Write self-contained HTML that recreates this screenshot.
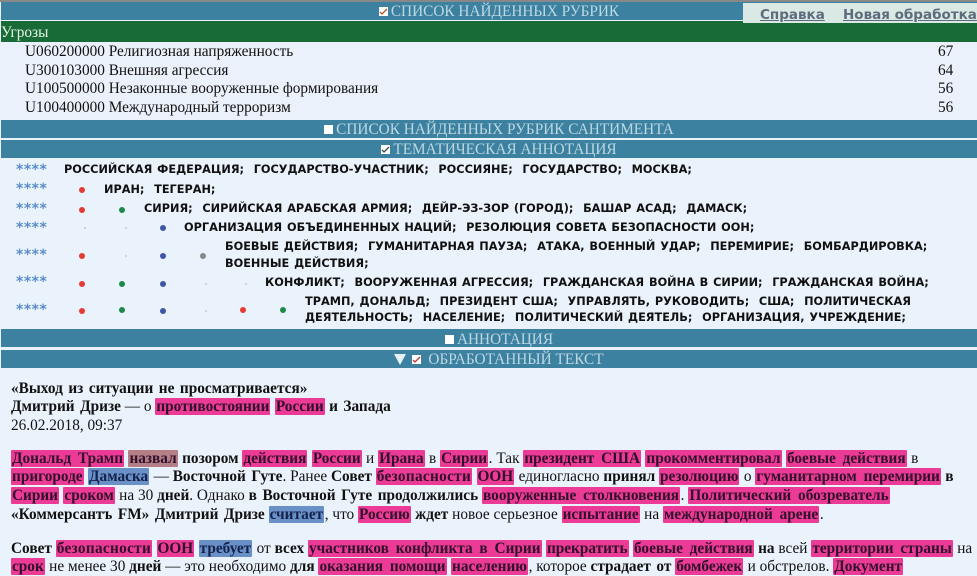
<!DOCTYPE html>
<html lang="ru"><head><meta charset="utf-8"><style>
html,body{margin:0;padding:0}
body{width:977px;height:569px;overflow:hidden;position:relative;background:#eaf2fb;font-family:"Liberation Serif",serif;font-size:15.3px;color:#111}
.a{position:absolute;white-space:nowrap}
.bar{position:absolute;left:1px;width:976px;height:18px;box-sizing:border-box;padding-left:20px;background:#3d81a0;color:#bcd8e2;font-size:15.3px;line-height:20px;text-align:center;overflow:hidden}
.cb{display:inline-block;width:9px;height:9px;background:#fff;margin-right:3px;vertical-align:-0px;position:relative}
.cb svg{position:absolute;left:0;top:0}
.r{position:absolute;left:25px;line-height:18px;white-space:nowrap}
.n{position:absolute;left:938px;line-height:18px}
.s{position:absolute;left:16px;color:#5c8dc8;font:bold 14px "DejaVu Sans",sans-serif;letter-spacing:.5px}
.d{position:absolute;width:6px;height:6px;border-radius:50%}
.f{position:absolute;width:2px;height:2px;background:#ccd3dc}
.t{position:absolute;font:bold 11.3px/18px "DejaVu Sans",sans-serif;white-space:nowrap;color:#111;word-spacing:.9px}
.l{position:absolute;left:11px;white-space:nowrap;line-height:18px}
b{font-weight:bold;word-spacing:1.7px}
.p,.g,.u{font-weight:bold;padding:0 1px;margin-right:.6px;word-spacing:3px;border-radius:1px;color:#30102a;display:inline-block;height:17px;line-height:18px;vertical-align:top}
.p{background:#ec3b96}.g{background:#b47f86}.u{background:#6a90c8;color:#14224a}
.w{letter-spacing:.3px}
</style></head><body>
<div class="a" style="left:0;top:0;width:977px;height:2px;background:#888"></div>
<div class="bar" style="top:2px"><span class="cb"><svg width="9" height="9"><path d="M1 5l2 2 5-5" stroke="#a52" stroke-width="1.3" fill="none"/></svg></span>СПИСОК НАЙДЕННЫХ РУБРИК</div>
<div class="a" style="left:743px;top:3px;width:234px;height:20px;background:#dbe9e4;z-index:3"></div>
<div class="a" style="left:760px;top:7px;z-index:4;font:bold 13.5px/16px 'DejaVu Sans',sans-serif;color:#5d6b7d;text-decoration:underline">Справка</div>
<div class="a" style="left:843px;top:7px;z-index:4;font:bold 13.5px/16px 'DejaVu Sans',sans-serif;color:#5d6b7d;text-decoration:underline">Новая обработка</div>
<div class="a" style="left:1px;top:21px;width:976px;height:21px;background:#186a36;color:#e6f5e6;line-height:24px">Угрозы</div>
<div class="a" style="left:0;top:42px;width:977px;height:78px;background:#ebf1fa"></div>

<div class="r" style="top:43px">U060200000 Религиозная напряженность</div><div class="n" style="top:43px">67</div>
<div class="r" style="top:62px">U300103000 Внешняя агрессия</div><div class="n" style="top:62px">64</div>
<div class="r" style="top:80px">U100500000 Незаконные вооруженные формирования</div><div class="n" style="top:80px">56</div>
<div class="r" style="top:99px">U100400000 Международный терроризм</div><div class="n" style="top:99px">56</div>

<div class="bar" style="top:120px"><span class="cb"></span>СПИСОК НАЙДЕННЫХ РУБРИК САНТИМЕНТА</div>
<div class="bar" style="top:140px"><span class="cb"><svg width="9" height="9"><path d="M1 5l2 2 5-5" stroke="#444" stroke-width="1.3" fill="none"/></svg></span>ТЕМАТИЧЕСКАЯ АННОТАЦИЯ</div>

<div class="s" style="top:162px">****</div>
<div class="s" style="top:181px">****</div>
<div class="s" style="top:201px">****</div>
<div class="s" style="top:220px">****</div>
<div class="s" style="top:247px">****</div>
<div class="s" style="top:274px">****</div>
<div class="s" style="top:302px">****</div>

<div class="d" style="left:79px;top:187px;background:#e53b33"></div>
<div class="d" style="left:79px;top:207px;background:#e53b33"></div>
<div class="d" style="left:119px;top:207px;background:#1d8a4a"></div>
<div class="f" style="left:84px;top:227px"></div>
<div class="f" style="left:125px;top:227px"></div>
<div class="d" style="left:160px;top:225px;background:#3f55a5"></div>
<div class="d" style="left:79px;top:253px;background:#e53b33"></div>
<div class="f" style="left:125px;top:255px"></div>
<div class="d" style="left:160px;top:253px;background:#3f55a5"></div>
<div class="d" style="left:200px;top:253px;background:#888"></div>
<div class="d" style="left:79px;top:281px;background:#e53b33"></div>
<div class="d" style="left:119px;top:281px;background:#1d8a4a"></div>
<div class="d" style="left:160px;top:281px;background:#3f55a5"></div>
<div class="f" style="left:205px;top:283px"></div>
<div class="f" style="left:245px;top:283px"></div>
<div class="d" style="left:79px;top:308px;background:#e53b33"></div>
<div class="d" style="left:119px;top:307px;background:#1d8a4a"></div>
<div class="d" style="left:160px;top:308px;background:#3f55a5"></div>
<div class="f" style="left:205px;top:310px"></div>
<div class="d" style="left:240px;top:307px;background:#e53b33"></div>
<div class="d" style="left:280px;top:307px;background:#1d8a4a"></div>

<div class="t" style="left:64px;top:161px">РОССИЙСКАЯ ФЕДЕРАЦИЯ;&nbsp; ГОСУДАРСТВО-УЧАСТНИК;&nbsp; РОССИЯНЕ;&nbsp; ГОСУДАРСТВО;&nbsp; МОСКВА;</div>
<div class="t" style="left:104px;top:181px">ИРАН;&nbsp; ТЕГЕРАН;</div>
<div class="t" style="left:144px;top:200px">СИРИЯ;&nbsp; СИРИЙСКАЯ АРАБСКАЯ АРМИЯ;&nbsp; ДЕЙР-ЭЗ-ЗОР (ГОРОД);&nbsp; БАШАР АСАД;&nbsp; ДАМАСК;</div>
<div class="t" style="left:184px;top:219px">ОРГАНИЗАЦИЯ ОБЪЕДИНЕННЫХ НАЦИЙ;&nbsp; РЕЗОЛЮЦИЯ СОВЕТА БЕЗОПАСНОСТИ ООН;</div>
<div class="t" style="left:225px;top:238px">БОЕВЫЕ ДЕЙСТВИЯ;&nbsp; ГУМАНИТАРНАЯ ПАУЗА;&nbsp; АТАКА, ВОЕННЫЙ УДАР;&nbsp; ПЕРЕМИРИЕ;&nbsp; БОМБАРДИРОВКА;</div>
<div class="t" style="left:225px;top:255px">ВОЕННЫЕ ДЕЙСТВИЯ;</div>
<div class="t" style="left:265px;top:274px">КОНФЛИКТ;&nbsp; ВООРУЖЕННАЯ АГРЕССИЯ;&nbsp; ГРАЖДАНСКАЯ ВОЙНА В СИРИИ;&nbsp; ГРАЖДАНСКАЯ ВОЙНА;</div>
<div class="t" style="left:305px;top:293px">ТРАМП, ДОНАЛЬД;&nbsp; ПРЕЗИДЕНТ США;&nbsp; УПРАВЛЯТЬ, РУКОВОДИТЬ;&nbsp; США;&nbsp; ПОЛИТИЧЕСКАЯ</div>
<div class="t" style="left:305px;top:309px">ДЕЯТЕЛЬНОСТЬ;&nbsp; НАСЕЛЕНИЕ;&nbsp; ПОЛИТИЧЕСКИЙ ДЕЯТЕЛЬ;&nbsp; ОРГАНИЗАЦИЯ, УЧРЕЖДЕНИЕ;</div>

<div class="bar" style="top:329px;line-height:22px"><span class="cb"></span>АННОТАЦИЯ</div>
<div class="bar" style="top:350px"><svg width="12" height="11" style="margin-right:6px;vertical-align:-1px"><path d="M0 0H12L6 11Z" fill="#e6f2f6"/></svg><span class="cb" style="margin-right:7px"><svg width="9" height="9"><path d="M1 5l2 2 5-5" stroke="#b33" stroke-width="1.3" fill="none"/></svg></span>ОБРАБОТАННЫЙ ТЕКСТ</div>

<div class="l" style="top:380px"><b>«Выход из ситуации не просматривается»</b></div>
<div class="l" style="top:398px"><b>Дмитрий Дризе</b> — о <span class="p">противостоянии</span> <span class="p">России</span> <b>и Запада</b></div>
<div class="l" style="top:417px">26.02.2018, 09:37</div>

<div class="l" style="top:450px"><span class="p">Дональд Трамп</span> <span class="g">назвал</span> <b>позором</b> <span class="p">действия</span> <span class="p">России</span> и <span class="p">Ирана</span> в <span class="p">Сирии</span>. Так <span class="p">президент США</span> <span class="p">прокомментировал</span> <span class="p">боевые действия</span> в</div>
<div class="l" style="top:468px"><span class="p">пригороде</span> <span class="u">Дамаска</span> — <b>Восточной Гуте</b>. Ранее <b>Совет</b> <span class="p w">безопасности</span> <span class="p">ООН</span> единогласно <b>принял</b> <span class="p">резолюцию</span> о <span class="p">гуманитарном перемирии</span> <b>в</b></div>
<div class="l" style="top:487px"><span class="p">Сирии</span> <span class="p">сроком</span> на 30 <b>дней</b>. Однако <b>в Восточной Гуте продолжились</b> <span class="p">вооруженные столкновения</span>. <span class="p">Политический обозреватель</span></div>
<div class="l" style="top:506px"><b>«Коммерсантъ FM» Дмитрий Дризе</b> <span class="u">считает</span>, что <span class="p">Россию</span> <b>ждет</b> новое серьезное <span class="p">испытание</span> на <span class="p">международной арене</span>.</div>
<div class="l" style="top:540px"><b>Совет</b> <span class="p w">безопасности</span> <span class="p">ООН</span> <span class="u">требует</span> от <b>всех</b> <span class="p">участников конфликта в Сирии</span> <span class="p">прекратить</span> <span class="p">боевые действия</span> <b>на</b> всей <span class="p">территории страны</span> на</div>
<div class="l" style="top:558px"><span class="p">срок</span> не менее 30 <b>дней</b> — это необходимо <b>для</b> <span class="p">оказания помощи</span> <span class="p">населению</span>, которое <b>страдает от</b> <span class="p">бомбежек</span> и обстрелов. <span class="p">Документ</span></div>
</body></html>
